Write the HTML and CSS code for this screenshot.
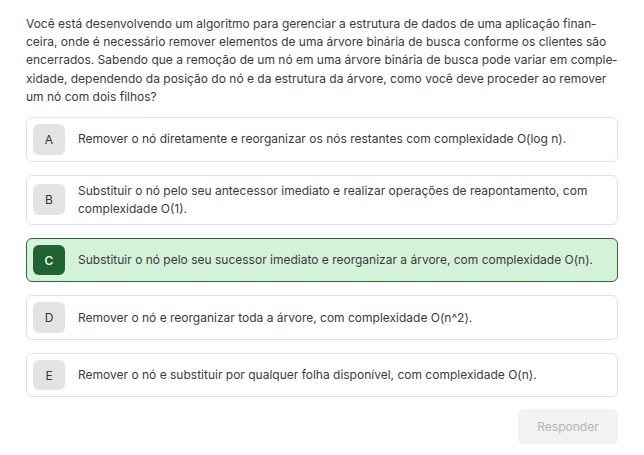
FILE: index.html
```html
<!DOCTYPE html>
<html lang="pt-BR">
<head>
<meta charset="utf-8">
<link rel="stylesheet" href="styles.css">
</head>
<body>
<main class="quiz">
  <p class="question">Você está desenvolvendo um algoritmo para gerenciar a estrutura de dados de uma aplicação finan&shy;ceira, onde é necessário remover elementos de uma árvore binária de busca conforme os clientes são encerrados. Sabendo que a remoção de um nó em uma árvore binária de busca pode variar em comple&shy;xidade, dependendo da posição do nó e da estrutura da árvore, como você deve proceder ao remover um nó com dois filhos?</p>
  <ul class="options">
    <li class="option"><span class="letter">A</span><span class="text">Remover o nó diretamente e reorganizar os nós restantes com complexidade O(log n).</span></li>
    <li class="option"><span class="letter">B</span><span class="text">Substituir o nó pelo seu antecessor imediato e realizar operações de reapontamento, com complexidade O(1).</span></li>
    <li class="option selected"><span class="letter">C</span><span class="text">Substituir o nó pelo seu sucessor imediato e reorganizar a árvore, com complexidade O(n).</span></li>
    <li class="option"><span class="letter">D</span><span class="text">Remover o nó e reorganizar toda a árvore, com complexidade O(n^2).</span></li>
    <li class="option"><span class="letter">E</span><span class="text">Remover o nó e substituir por qualquer folha disponível, com complexidade O(n).</span></li>
  </ul>
  <div class="actions"><button class="submit" disabled>Responder</button></div>
</main>
</body>
</html>
```
FILE: styles.css
```css
* { box-sizing: border-box; }
html, body { margin: 0; padding: 0; background: #ffffff; }
body {
  font-family: Inter, "Noto Sans", "Liberation Sans", sans-serif;
  font-size: 12px;
  color: #3a3a3a;
}
.quiz {
  padding: 15px 26px 0 26px;
  display: flex;
  flex-direction: column;
}
.question {
  margin: 0;
  line-height: 18.2px;
  hyphens: manual;
}
.options {
  list-style: none;
  margin: 11px 0 0 0;
  padding: 0;
  display: flex;
  flex-direction: column;
  gap: 13px;
}
.option {
  display: flex;
  align-items: center;
  gap: 13px;
  padding: 6px;
  border: 1px solid #e2e2e2;
  border-radius: 6px;
  background: #fff;
  min-height: 44.5px;
}
.letter {
  flex: 0 0 32px;
  width: 32px;
  height: 30.5px;
  display: flex;
  align-items: center;
  justify-content: center;
  background: #e3e3e3;
  border-radius: 6px;
  color: #333;
  font-weight: 400;
}
.text {
  line-height: 18.2px;
  color: #3a3a3a;
}
.option.selected {
  background: #d3f2d9;
  border-color: #2a6b38;
}
.option.selected .letter {
  background: #1f6330;
  color: #ffffff;
  font-weight: 500;
}
.actions {
  display: flex;
  justify-content: flex-end;
  margin-top: 12px;
}
.submit {
  width: 100px;
  height: 35px;
  border: none;
  border-radius: 6px;
  background: #f2f2f2;
  color: #b3b3b3;
  font-family: inherit;
  font-size: 12px;
}
```
